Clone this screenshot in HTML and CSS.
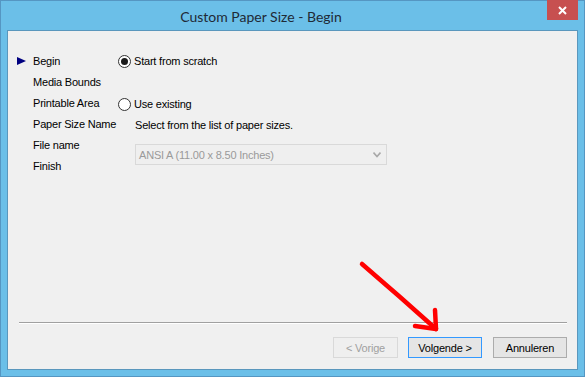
FILE: index.html
```html
<!DOCTYPE html>
<html lang="en">
<head>
    <meta charset="UTF-8">
    <meta name="viewport" content="width=device-width, initial-scale=1.0">
    <title>Custom Paper Size - Begin</title>
    <link rel="stylesheet" href="styles.css">
</head>
<body>
    <div class="window">
        <div class="titlebar">
            <div class="title">Custom Paper Size - Begin</div>
            <div class="close">
                <svg width="9" height="9" viewBox="0 0 9 9">
                    <path d="M1 1 L8 8 M8 1 L1 8" stroke="#fff" stroke-width="2" fill="none"/>
                </svg>
            </div>
        </div>

        <div class="client">
            <div class="content">
                <ul class="steps">
                    <li class="current">Begin</li>
                    <li>Media Bounds</li>
                    <li>Printable Area</li>
                    <li>Paper Size Name</li>
                    <li>File name</li>
                    <li>Finish</li>
                </ul>

                <div class="pane">
                    <div class="radio"><span class="circle checked"></span>Start from scratch</div>
                    <div class="radio existing"><span class="circle"></span>Use existing</div>
                    <div class="hint">Select from the list of paper sizes.</div>
                    <div class="combo">
                        <span>ANSI A (11.00 x 8.50 Inches)</span>
                        <svg width="8" height="6" viewBox="0 0 8 6">
                            <path d="M0.5 0.5 L4 4.5 L7.5 0.5" stroke="#a8a8a8" stroke-width="1.6" fill="none"/>
                        </svg>
                    </div>
                </div>
            </div>

            <div class="separator"></div>

            <div class="buttons">
                <div class="btn back">&lt; Vorige</div>
                <div class="btn next">Volgende &gt;</div>
                <div class="btn cancel">Annuleren</div>
            </div>
        </div>

        <!-- rode pijl die over het venster is getekend -->
        <svg class="annotation" width="585" height="377" viewBox="0 0 585 377">
            <path d="M362 264 L385 284 L400 297 L418 313 L436 329" stroke="#f00" stroke-width="4.5" fill="none" stroke-linecap="round" stroke-linejoin="round"/>
            <path d="M435 310 L436 329 L415 326" stroke="#f00" stroke-width="4.5" fill="none" stroke-linecap="round" stroke-linejoin="round"/>
        </svg>
    </div>
</body>
</html>
```

FILE: styles.css
```css
body {
    margin: 0;
    font-family: "Liberation Sans", Arial, sans-serif;
    font-size: 11px;
    letter-spacing: -0.2px;
    color: #000;
}
.window {
    position: relative;
    width: 585px;
    height: 377px;
    box-sizing: border-box;
    border: 1px solid #5596c2;
    background-color: #6bbfe8;
    display: flex;
    flex-direction: column;
}
.titlebar {
    height: 29px;
    display: flex;
    align-items: flex-start;
}
.title {
    flex: 1;
    text-align: center;
    padding-right: 26px;
    padding-top: 6px;
    font-family: Lato, "Noto Sans", sans-serif;
    font-size: 14px;
    letter-spacing: 0;
    line-height: 20px;
    color: #1f2a36;
}
.close {
    width: 31px;
    height: 20px;
    margin-top: -1px;
    margin-right: 6px;
    background-color: #c75050;
    display: flex;
    align-items: center;
    justify-content: center;
}
.client {
    flex: 1;
    margin: 0 6px 6px 6px;
    border: 1px solid #5a97bd;
    background-color: #f0f0f0;
    display: flex;
    flex-direction: column;
}
.content {
    height: 291px;
    display: flex;
}
.steps {
    list-style: none;
    margin: 20px 0 0 0;
    padding: 0 0 0 25px;
    width: 85px;
}
.steps li {
    position: relative;
    line-height: 21px;
    white-space: nowrap;
}
.steps li.current::before {
    content: "";
    position: absolute;
    left: -16px;
    top: 6px;
    border-left: 9px solid #000080;
    border-top: 4.5px solid transparent;
    border-bottom: 4.5px solid transparent;
}
.pane {
    margin-top: 20px;
}
.radio {
    display: flex;
    align-items: center;
    line-height: 21px;
}
.radio.existing {
    margin-top: 22px;
}
.circle {
    width: 13px;
    height: 13px;
    box-sizing: border-box;
    border: 1px solid #333;
    border-radius: 50%;
    background-color: #fff;
    margin-right: 3px;
    display: flex;
    align-items: center;
    justify-content: center;
}
.circle.checked::after {
    content: "";
    width: 7px;
    height: 7px;
    border-radius: 50%;
    background-color: #1a1a1a;
}
.hint {
    line-height: 21px;
    margin-left: 17px;
}
.combo {
    margin: 8px 0 0 17px;
    width: 252px;
    height: 21px;
    box-sizing: border-box;
    border: 1px solid #d9d9d9;
    background-color: #efefef;
    color: #9a9a9a;
    display: flex;
    align-items: center;
    justify-content: space-between;
    padding: 0 5px 0 3px;
}
.separator {
    margin: 0 10px 0 11px;
    border-top: 1px solid #a0a0a0;
    border-bottom: 1px solid #fff;
}
.buttons {
    display: flex;
    justify-content: flex-end;
    padding-right: 10px;
    margin-top: 13px;
}
.btn {
    height: 21px;
    box-sizing: border-box;
    width: 74px;
    border: 1px solid #acacac;
    background-color: #e5e5e5;
    display: flex;
    align-items: center;
    justify-content: center;
}
.btn.back {
    width: 65px;
    border-color: #d9d9d9;
    background-color: #efefef;
    color: #a0a0a0;
}
.btn.next {
    margin-left: 10px;
    border-color: #3399ff;
}
.btn.cancel {
    margin-left: 11px;
}
.annotation {
    position: absolute;
    left: -1px;
    top: -1px;
    pointer-events: none;
}
```
